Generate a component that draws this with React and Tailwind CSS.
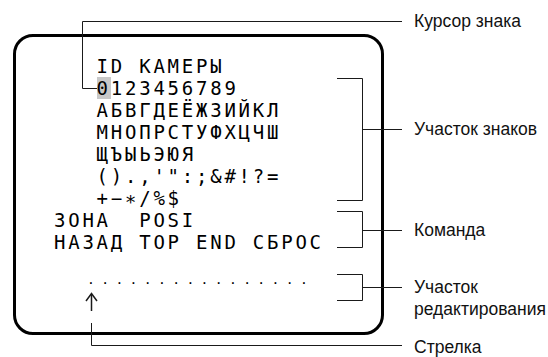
import React from "react";

const rows = [
  "   ID КАМЕРЫ",
  null,
  "   АБВГДЕЁЖЗИЙКЛ",
  "   МНОПРСТУФХЦЧШ",
  "   ЩЪЫЬЭЮЯ",
  "   ().,'\":;&#!?=",
  "   +−∗/%$",
  "ЗОНА  POSI",
  "НАЗАД TOP END СБРОС",
];

const labels = [
  { text: "Курсор знака", top: "top-[11px]" },
  { text: "Участок знаков", top: "top-[119px]" },
  { text: "Команда", top: "top-[220px]" },
  { text: "Участок", top: "top-[277px]" },
  { text: "редактирования", top: "top-[299px]" },
  { text: "Стрелка", top: "top-[337px]" },
];

const Callouts = () => (
  <svg
    className="absolute left-0 top-0 pointer-events-none"
    width="548"
    height="357"
    fill="none"
    stroke="#1a1a1a"
    strokeWidth="1"
  >
    {/* курсор */}
    <polyline points="402,21.5 82.5,21.5 82.5,88.5 97,88.5" />
    {/* участок знаков */}
    <polyline points="337,78.5 362.5,78.5 362.5,200.5 337,200.5" />
    <line x1="362.5" y1="129.5" x2="402" y2="129.5" />
    {/* команда */}
    <polyline points="337,211.5 362.5,211.5 362.5,247.5 337,247.5" />
    <line x1="362.5" y1="230.5" x2="402" y2="230.5" />
    {/* участок редактирования */}
    <polyline points="337,274.5 362.5,274.5 362.5,300.5 337,300.5" />
    <line x1="362.5" y1="287.5" x2="402" y2="287.5" />
    {/* стрелка */}
    <line x1="91.5" y1="294" x2="91.5" y2="311" strokeWidth="1.5" />
    <polyline points="86,301 91.5,293.5 97,301" strokeWidth="1.5" />
    <polyline points="91.5,323 91.5,345.5 402,345.5" />
  </svg>
);

export default function App() {
  return (
    <div className="relative w-[548px] h-[357px] bg-white overflow-hidden pt-[34px] pl-[13px]">
      <div className="w-[371px] h-[301px] border-[3px] border-black rounded-[20px] pl-[38px] pt-[18px]">
        <div className="font-['DejaVu_Sans_Mono',monospace] text-[19px] leading-[22px] tracking-[2.76px] text-black whitespace-pre">
          {rows.map((r, i) =>
            r === null ? (
              <div key={i}>
                {"   "}
                <span className="bg-[#c8c8c8]">0</span>
                {"123456789"}
              </div>
            ) : (
              <div key={i}>{r}</div>
            )
          )}
        </div>
        <div className="mt-[16px] pl-[33px] font-['DejaVu_Sans_Mono',monospace] text-[13px] leading-[22px] tracking-[6.37px] text-black whitespace-pre">
          ................
        </div>
      </div>

      <Callouts />

      {labels.map((l) => (
        <div
          key={l.text}
          className={`absolute left-[414px] ${l.top} font-['Liberation_Sans',Arial,sans-serif] text-[17.5px] leading-[20px] text-[#111] whitespace-nowrap`}
        >
          {l.text}
        </div>
      ))}
    </div>
  );
}
